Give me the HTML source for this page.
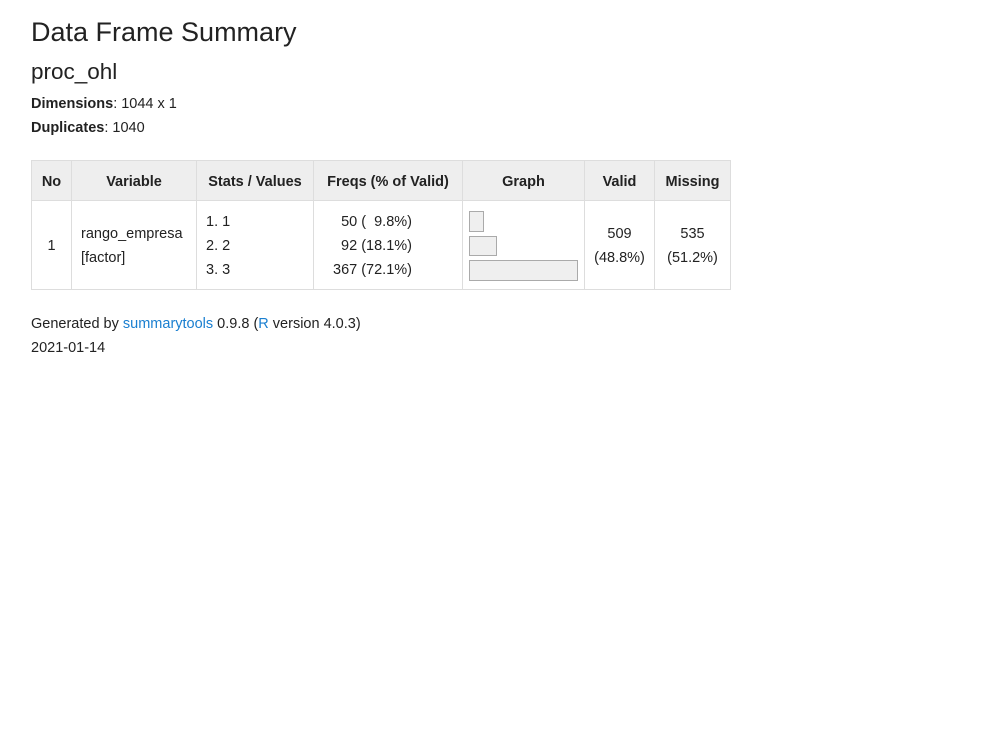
<!DOCTYPE html>
<html><head><style>
body{margin:0;background:#fff;font-family:"Liberation Sans",sans-serif;color:#222;}
.a{position:absolute;white-space:nowrap;}
table{position:absolute;left:31px;top:160px;border-collapse:collapse;font-size:14.5px;}
td,th{border:1px solid #ddd;padding:0;text-align:center;}
th{background:#eee;height:40px;font-weight:bold;padding-top:3px;box-sizing:border-box;}
td{height:86px;padding-top:2px;}
.bar{position:absolute;left:469px;background:#efefef;border:1px solid #aaa;box-sizing:border-box;}
a{color:#1a7fd0;text-decoration:none;}
</style></head><body>
<div class="a" style="left:31px;top:17px;font-size:27px;">Data Frame Summary</div>
<div class="a" style="left:31px;top:59px;font-size:22.5px;">proc_ohl</div>
<div class="a" style="left:31px;top:96px;font-size:14.5px;"><b>Dimensions</b>: 1044 x 1</div>
<div class="a" style="left:31px;top:120px;font-size:14.5px;"><b>Duplicates</b>: 1040</div>
<table>
<tr><th style="width:40px">No</th><th style="width:125px">Variable</th><th style="width:117px">Stats / Values</th><th style="width:149px">Freqs (% of Valid)</th><th style="width:122px">Graph</th><th style="width:70px">Valid</th><th style="width:76px">Missing</th></tr>
<tr><td>1</td><td style="text-align:left;padding-left:9px;line-height:24px">rango_empresa<br>[factor]</td>
<td style="text-align:left;padding-left:9px;line-height:24px">1. 1<br>2. 2<br>3. 3</td>
<td style="line-height:24px;white-space:pre;text-align:right;padding-right:50px">  50 (  9.8%)
  92 (18.1%)
367 (72.1%)</td>
<td></td><td style="line-height:24px">509<br>(48.8%)</td><td style="line-height:24px">535<br>(51.2%)</td></tr>
</table>
<div class="bar" style="top:211px;width:15px;height:21px"></div>
<div class="bar" style="top:236px;width:28px;height:20px"></div>
<div class="bar" style="top:260px;width:109px;height:21px"></div>
<div class="a" style="left:31px;top:316px;font-size:14.5px;">Generated by <a>summarytools</a> 0.9.8 (<a>R</a> version 4.0.3)</div>
<div class="a" style="left:31px;top:340px;font-size:14.5px;">2021-01-14</div>
</body></html>
